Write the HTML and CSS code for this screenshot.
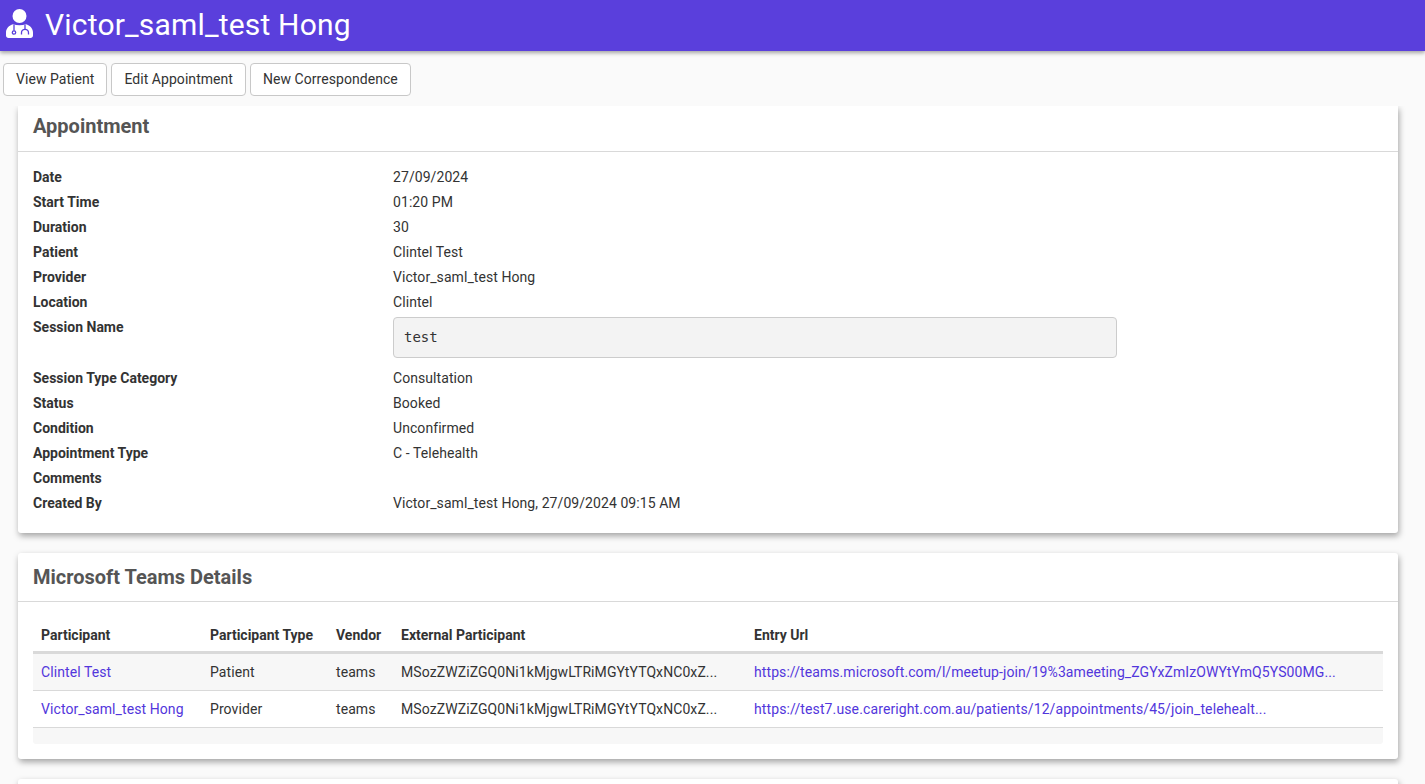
FILE: index.html
```html
<!DOCTYPE html>
<html lang="en">
<head>
<meta charset="utf-8">
<title>Victor_saml_test Hong</title>
<link rel="stylesheet" href="styles.css">
</head>
<body>
<header class="topbar">
  <svg class="topbar-icon" viewBox="0 0 27 29" aria-hidden="true">
    <circle cx="13.5" cy="7" r="7" fill="#fff"/>
    <path d="M7 15.200C3 16.200 0 19.500 0 23.500V26.500C0 27.900 1.100 29 2.500 29H24.500C25.900 29 27 27.900 27 26.500V23.500C27 19.500 24 16.200 20 15.200C18 15.900 15.800 16.300 13.500 16.300S9 15.900 7 15.200Z" fill="#fff"/>
    <g fill="none" stroke="#5a3fdc" stroke-width="1.300">
      <path d="M8 15.500V21.800"/>
      <circle cx="8" cy="23.500" r="1.700"/>
      <path d="M19 15.500V20"/>
      <path d="M15.500 25.500V23.800A3.500 3.500 0 0 1 22.500 23.800V25.500"/>
    </g>
  </svg>
  <h1 class="topbar-title">Victor_saml_test Hong</h1>
</header>

<nav class="actions">
  <a class="btn">View Patient</a>
  <a class="btn">Edit Appointment</a>
  <a class="btn">New Correspondence</a>
</nav>

<main class="content">
  <section class="card card-first">
    <h2 class="card-title">Appointment</h2>
    <dl class="details">
      <dt>Date</dt><dd>27/09/2024</dd>
      <dt>Start Time</dt><dd>01:20 PM</dd>
      <dt>Duration</dt><dd>30</dd>
      <dt>Patient</dt><dd>Clintel Test</dd>
      <dt>Provider</dt><dd>Victor_saml_test Hong</dd>
      <dt>Location</dt><dd>Clintel</dd>
      <dt>Session Name</dt><dd><pre class="code">test</pre></dd>
      <dt>Session Type Category</dt><dd>Consultation</dd>
      <dt>Status</dt><dd>Booked</dd>
      <dt>Condition</dt><dd>Unconfirmed</dd>
      <dt>Appointment Type</dt><dd>C - Telehealth</dd>
      <dt>Comments</dt><dd></dd>
      <dt>Created By</dt><dd>Victor_saml_test Hong, 27/09/2024 09:15 AM</dd>
    </dl>
  </section>

  <section class="card">
    <h2 class="card-title">Microsoft Teams Details</h2>
    <div class="table-wrap">
      <table class="table">
        <colgroup>
          <col class="col-a"><col class="col-b"><col class="col-c"><col class="col-d"><col class="col-e">
        </colgroup>
        <thead>
          <tr><th>Participant</th><th>Participant Type</th><th>Vendor</th><th>External Participant</th><th>Entry Url</th></tr>
        </thead>
        <tbody>
          <tr class="shaded">
            <td><a class="link">Clintel Test</a></td><td>Patient</td><td>teams</td>
            <td>MSozZWZiZGQ0Ni1kMjgwLTRiMGYtYTQxNC0xZ...</td>
            <td><a class="link">https://teams.microsoft.com/l/meetup-join/19%3ameeting_ZGYxZmIzOWYtYmQ5YS00MG...</a></td>
          </tr>
          <tr>
            <td><a class="link">Victor_saml_test Hong</a></td><td>Provider</td><td>teams</td>
            <td>MSozZWZiZGQ0Ni1kMjgwLTRiMGYtYTQxNC0xZ...</td>
            <td><a class="link link-wide">https://test7.use.careright.com.au/patients/12/appointments/45/join_telehealt...</a></td>
          </tr>
        </tbody>
      </table>
      <div class="table-foot"></div>
    </div>
  </section>

  <section class="card card-empty"></section>
</main>
</body>
</html>
```
FILE: styles.css
```css
html, body {
  margin: 0;
  height: 784px;
  overflow: hidden;
}
body {
  background: #fafafa;
  color: #333;
  font-family: Roboto, "Liberation Sans", sans-serif;
  font-size: 14px;
  line-height: 25px;
  letter-spacing: .07px;
}
.topbar {
  height: 51px;
  background: #5a3fdc;
  color: #fff;
  display: flex;
  align-items: center;
  gap: 12px;
  padding-left: 6px;
  box-shadow: 0 2px 4px rgba(0,0,0,.35);
  position: relative;
}
.topbar-icon {
  width: 27px;
  height: 29px;
  flex: none;
  margin-bottom: 4px;
}
.topbar-title {
  margin: 0 0 2px;
  font-size: 30px;
  font-weight: 400;
  line-height: 48px;
  letter-spacing: .19px;
}
.actions {
  display: flex;
  gap: 4px;
  padding: 12px 3px 10px;
}
.btn {
  height: 33px;
  box-sizing: border-box;
  border: 1px solid #c8c8c8;
  border-radius: 4px;
  background: #fff;
  padding: 0 12px;
  line-height: 31px;
  letter-spacing: .05px;
  color: #333;
}
.content {
  padding: 0 27px 0 18px;
}
.card {
  background: #fff;
  border-radius: 3px;
  box-shadow: 1px 3px 6px rgba(0,0,0,.35);
  margin-bottom: 20px;
}
.card-first {
  border-radius: 0 0 3px 3px;
  height: 427px;
  clip-path: inset(0 -12px -12px -12px);
}
.card-title {
  margin: 0;
  padding: 0 15px;
  height: 45px;
  line-height: 40px;
  font-size: 20px;
  font-weight: 700;
  color: #555;
  letter-spacing: 0;
  border-bottom: 1px solid #d9d9d9;
}
.card + .card .card-title {
  height: 48px;
  line-height: 48px;
}
.details {
  display: grid;
  grid-template-columns: 360px 1fr;
  margin: 0;
  padding: 13px 15px 0;
}
.details dt {
  font-weight: 700;
  letter-spacing: 0;
}
.details dd {
  margin: 0;
  min-height: 25px;
}
.code {
  box-sizing: border-box;
  width: 724px;
  height: 41px;
  margin: 2px 0 8px;
  padding: 9px 10px;
  background: #f3f3f3;
  border: 1px solid #ccc;
  border-radius: 4px;
  font-family: "DejaVu Sans Mono", monospace;
  font-size: 14px;
  line-height: 21px;
  letter-spacing: 0;
  color: #333;
}
.table-wrap {
  padding: 17px 15px 15px;
}
.table {
  width: 100%;
  border-collapse: collapse;
  table-layout: fixed;
}
.col-a { width: 169px; }
.col-b { width: 126px; }
.col-c { width: 65px; }
.col-d { width: 353px; }
.table th {
  text-align: left;
  font-weight: 700;
  letter-spacing: 0;
  padding: 4px 8px 3px;
  height: 25px;
  border-bottom: 3px solid #d9d9d9;
  white-space: nowrap;
}
.table td {
  padding: 5px 8px;
  height: 26px;
  border-bottom: 1px solid #d9d9d9;
  white-space: nowrap;
  overflow: hidden;
  letter-spacing: .085px;
}
.shaded {
  background: #f7f7f7;
}
.link {
  color: #5236dc;
}
.link-wide {
  letter-spacing: .12px;
}
.table-foot {
  height: 16px;
  background: #f7f7f7;
  border-radius: 0 0 3px 3px;
}
.card-empty {
  height: 100px;
}
```
